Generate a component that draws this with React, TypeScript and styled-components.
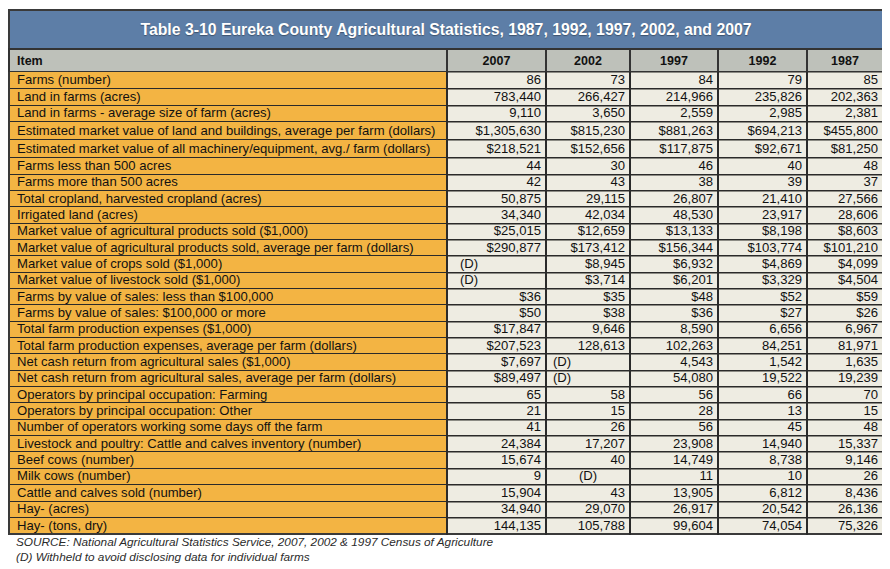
import styled, { createGlobalStyle } from "styled-components";

const GlobalStyle = createGlobalStyle`
  body {
    margin: 8px;
    background: #ffffff;
    font-family: "Liberation Sans", Arial, sans-serif;
  }
`;

const Wrap = styled.div`
  width: 874px;
  margin-top: 1px;
`;

const Table = styled.table`
  width: 874px;
  table-layout: fixed;
  border-collapse: collapse;
  border: 2px solid #3a3a3a;
  font-size: 13.1px;
  color: #111;
`;

const TitleCell = styled.th`
  height: 37px;
  padding: 0;
  background: #5d7ea7;
  color: #ffffff;
  font-size: 15.8px;
  font-weight: bold;
  text-align: center;
  text-shadow: 0 1px 1px rgba(0, 0, 0, 0.35);
  border-bottom: 2px solid #333;
`;

const HeadCell = styled.th<{ $first?: boolean }>`
  height: 21px;
  padding: ${(p) => (p.$first ? "0 0 0 7px" : "0")};
  background: #bec1ba;
  font-size: 12.5px;
  font-weight: bold;
  line-height: 14px;
  text-align: ${(p) => (p.$first ? "left" : "center")};
  border: 1px solid #333;
  border-left-width: 2px;
`;

const ItemCell = styled.td<{ $h: number }>`
  height: ${(p) => p.$h}px;
  padding: 0 0 0 7px;
  background: #f3b443;
  white-space: nowrap;
  line-height: 14px;
  border-bottom: 1px solid #2a2a2a;
`;

const ValueCell = styled.td<{ $align: string; $pad: number }>`
  padding: 0 ${(p) => (p.$align === "right" ? 4 : 0)}px 0 ${(p) => p.$pad}px;
  background: #eeece2;
  text-align: ${(p) => p.$align};
  white-space: nowrap;
  line-height: 14px;
  border-bottom: 1px solid #2a2a2a;
  border-left: 2px solid #2a2a2a;
  box-shadow: inset 0 1px 0 #8c8b84;
`;

const Notes = styled.div`
  padding: 0 0 0 8px;
  font-size: 11.8px;
  font-style: italic;
  color: #2b2b2b;
  line-height: 15px;
`;

const years = ["2007", "2002", "1997", "1992", "1987"];
const widths = [438, 99, 84, 88, 89, 76];

const rows: string[][] = [
  ["Farms (number)", "86", "73", "84", "79", "85"],
  ["Land in farms (acres)", "783,440", "266,427", "214,966", "235,826", "202,363"],
  ["Land in farms - average size of farm (acres)", "9,110", "3,650", "2,559", "2,985", "2,381"],
  ["Estimated market value of land and buildings, average per farm (dollars)", "$1,305,630", "$815,230", "$881,263", "$694,213", "$455,800"],
  ["Estimated market value of all machinery/equipment, avg./ farm (dollars)", "$218,521", "$152,656", "$117,875", "$92,671", "$81,250"],
  ["Farms less than 500 acres", "44", "30", "46", "40", "48"],
  ["Farms more than 500 acres", "42", "43", "38", "39", "37"],
  ["Total cropland, harvested cropland (acres)", "50,875", "29,115", "26,807", "21,410", "27,566"],
  ["Irrigated land (acres)", "34,340", "42,034", "48,530", "23,917", "28,606"],
  ["Market value of agricultural products sold ($1,000)", "$25,015", "$12,659", "$13,133", "$8,198", "$8,603"],
  ["Market value of agricultural products sold, average per farm (dollars)", "$290,877", "$173,412", "$156,344", "$103,774", "$101,210"],
  ["Market value of crops sold ($1,000)", "(D)", "$8,945", "$6,932", "$4,869", "$4,099"],
  ["Market value of livestock sold ($1,000)", "(D)", "$3,714", "$6,201", "$3,329", "$4,504"],
  ["Farms by value of sales: less than $100,000", "$36", "$35", "$48", "$52", "$59"],
  ["Farms by value of sales: $100,000 or more", "$50", "$38", "$36", "$27", "$26"],
  ["Total farm production expenses ($1,000)", "$17,847", "9,646", "8,590", "6,656", "6,967"],
  ["Total farm production expenses, average per farm (dollars)", "$207,523", "128,613", "102,263", "84,251", "81,971"],
  ["Net cash return from agricultural sales ($1,000)", "$7,697", "(D)", "4,543", "1,542", "1,635"],
  ["Net cash return from agricultural sales, average per farm (dollars)", "$89,497", "(D)", "54,080", "19,522", "19,239"],
  ["Operators by principal occupation: Farming", "65", "58", "56", "66", "70"],
  ["Operators by principal occupation: Other", "21", "15", "28", "13", "15"],
  ["Number of operators working some days off the farm", "41", "26", "56", "45", "48"],
  ["Livestock and poultry: Cattle and calves inventory (number)", "24,384", "17,207", "23,908", "14,940", "15,337"],
  ["Beef cows (number)", "15,674", "40", "14,749", "8,738", "9,146"],
  ["Milk cows (number)", "9", "(D)", "11", "10", "26"],
  ["Cattle and calves sold (number)", "15,904", "43", "13,905", "6,812", "8,436"],
  ["Hay- (acres)", "34,940", "29,070", "26,917", "20,542", "26,136"],
  ["Hay- (tons, dry)", "144,135", "105,788", "99,604", "74,054", "75,326"],
];

// row heights as measured (border adds one pixel); most rows are ~16.4px
const rowHeight = (i: number) => (i === 3 ? 16.6 : i === 4 ? 17.3 : i < 3 ? 15.8 : 15.35);

// "(D)" entries sit differently from one cell to the next
const cellAlign = (r: number, c: number, v: string) => {
  if (v !== "(D)") return { align: "right", pad: 0 };
  if (r === 24) return { align: "center", pad: 0 };
  return { align: "left", pad: c === 1 ? 12 : 6 };
};

export default function App() {
  return (
    <>
      <GlobalStyle />
      <Wrap>
        <Table>
          <colgroup>
            {widths.map((w, i) => (
              <col key={i} style={{ width: w }} />
            ))}
          </colgroup>
          <thead>
            <tr>
              <TitleCell colSpan={6}>
                Table 3-10 Eureka County Agricultural Statistics, 1987, 1992, 1997, 2002, and 2007
              </TitleCell>
            </tr>
            <tr>
              <HeadCell $first>Item</HeadCell>
              {years.map((y) => (
                <HeadCell key={y}>{y}</HeadCell>
              ))}
            </tr>
          </thead>
          <tbody>
            {rows.map((row, r) => (
              <tr key={r}>
                <ItemCell $h={rowHeight(r)}>{row[0]}</ItemCell>
                {row.slice(1).map((v, c) => {
                  const a = cellAlign(r, c + 1, v);
                  return (
                    <ValueCell key={c} $align={a.align} $pad={a.pad}>
                      {v}
                    </ValueCell>
                  );
                })}
              </tr>
            ))}
          </tbody>
        </Table>
        <Notes>
          <div>SOURCE: National Agricultural Statistics Service, 2007, 2002 &amp; 1997 Census of Agriculture</div>
          <div>(D) Withheld to avoid disclosing data for individual farms</div>
        </Notes>
      </Wrap>
    </>
  );
}
